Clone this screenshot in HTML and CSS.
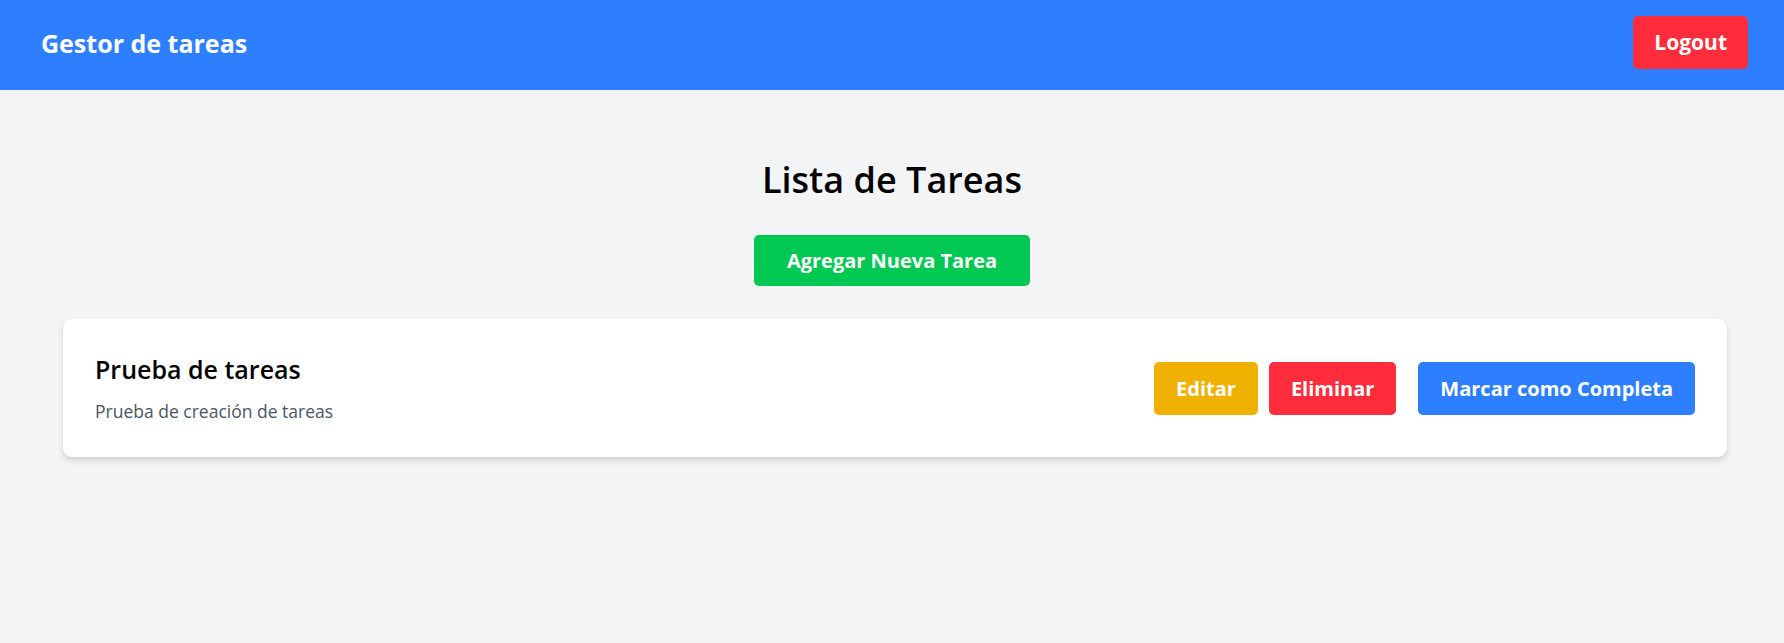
FILE: index.html
```html
<!DOCTYPE html>
<html lang="es">
<head>
<meta charset="utf-8">
<title>Gestor de tareas</title>
<link rel="stylesheet" href="styles.css">
</head>
<body>
<header class="topbar">
  <span class="brand">Gestor de tareas</span>
  <button class="btn btn-red btn-logout">Logout</button>
</header>
<main class="main">
  <h1 class="page-title">Lista de Tareas</h1>
  <div class="add-row">
    <button class="btn btn-green btn-add">Agregar Nueva Tarea</button>
  </div>
  <ul class="task-list">
    <li class="task-card">
      <div class="task-info">
        <h2 class="task-title">Prueba de tareas</h2>
        <p class="task-desc">Prueba de creación de tareas</p>
      </div>
      <div class="task-actions">
        <div class="action-group">
          <button class="btn btn-yellow">Editar</button>
          <button class="btn btn-red">Eliminar</button>
        </div>
        <button class="btn btn-blue">Marcar como Completa</button>
      </div>
    </li>
  </ul>
</main>
</body>
</html>
```

FILE: styles.css
```css
* { box-sizing: border-box; }
html, body { margin: 0; padding: 0; }
body {
  background: #f3f4f6;
  font-family: "Open Sans", "Noto Sans", sans-serif;
  color: #000;
  min-height: 643px;
}
.topbar {
  background: #2e7fff;
  display: flex;
  align-items: center;
  justify-content: space-between;
  padding: 16px 36px 21px 41px;
}
.brand {
  color: #fff;
  font-size: 25px;
  font-weight: 700;
  line-height: 36px;
}
.btn {
  border: none;
  color: #fff;
  font-family: inherit;
  font-weight: 700;
  font-size: 20px;
  line-height: 27px;
  padding: 13px 22px;
  border-radius: 5px;
  cursor: pointer;
}
.btn-red { background: #ff2d3b; }
.btn-green { background: #00c853; }
.btn-yellow { background: #f0b000; }
.btn-blue { background: #2e7fff; }
.btn-logout { font-size: 21px; padding: 13px 21px; }
.btn-add { padding: 12px 33px; }
.main {
  padding: 67px 0 0;
}
.page-title {
  margin: 0;
  text-align: center;
  font-size: 36px;
  line-height: 45px;
  font-weight: 600;
}
.add-row {
  display: flex;
  justify-content: center;
  margin-top: 33px;
}
.task-list {
  list-style: none;
  margin: 33px 0 0;
  padding: 0 57px 0 63px;
}
.task-card {
  background: #fff;
  border-radius: 9px;
  box-shadow: 0 4px 7px rgba(0, 0, 0, 0.1), 0 2px 4px rgba(0, 0, 0, 0.06);
  padding: 32px 32px 32px 32px;
  display: flex;
  align-items: center;
  justify-content: space-between;
}
.task-title {
  margin: 0;
  font-size: 25px;
  line-height: 36px;
  font-weight: 600;
}
.task-desc {
  margin: 11px 0 0;
  font-size: 17.5px;
  line-height: 27px;
  color: #4b5563;
}
.task-actions {
  display: flex;
  align-items: center;
  gap: 22px;
}
.action-group {
  display: flex;
  gap: 11px;
}
```
